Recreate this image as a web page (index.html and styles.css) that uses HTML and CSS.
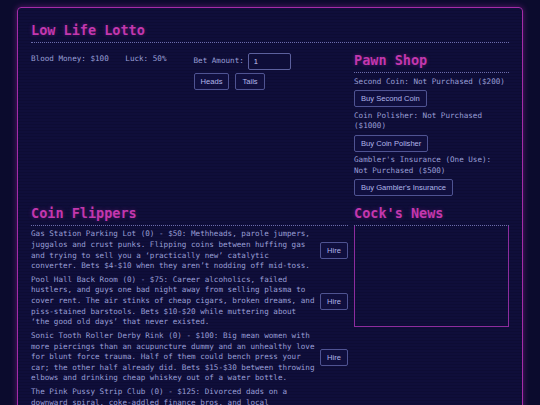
FILE: index.html
```html
<!DOCTYPE html>
<html lang="en">
<head>
  <meta charset="UTF-8" />
  <meta name="viewport" content="width=device-width, initial-scale=1.0" />
  <title>Low Life Lotto</title>
  <link rel="stylesheet" href="styles.css">
</head>
<body>
  <div class="game">
    <h1>Low Life Lotto</h1>

    <div class="board">
      <div class="table">
        <div class="stats">
          <span class="stat">Blood Money: $100</span>
          <span class="stat">Luck: 50%</span>
        </div>
        <div class="bet">
          <label class="bet-row">Bet Amount:
            <input id="bet" type="number" value="1" min="1" />
          </label>
          <div class="bet-buttons">
            <button>Heads</button>
            <button>Tails</button>
          </div>
        </div>
      </div>

      <div class="pawn">
        <h2>Pawn Shop</h2>
        <div class="item">
          <p>Second Coin: Not Purchased ($200)</p>
          <button>Buy Second Coin</button>
        </div>
        <div class="item">
          <p>Coin Polisher: Not Purchased ($1000)</p>
          <button>Buy Coin Polisher</button>
        </div>
        <div class="item">
          <p>Gambler's Insurance (One Use): Not Purchased ($500)</p>
          <button>Buy Gambler's Insurance</button>
        </div>
      </div>

      <div class="flippers">
        <h2>Coin Flippers</h2>
        <div class="flipper">
          <p>Gas Station Parking Lot (0) - $50: Methheads, parole jumpers, juggalos and crust punks. Flipping coins between huffing gas and trying to sell you a ‘practically new’ catalytic converter. Bets $4-$10 when they aren’t nodding off mid-toss.</p>
          <button>Hire</button>
        </div>
        <div class="flipper">
          <p>Pool Hall Back Room (0) - $75: Career alcoholics, failed hustlers, and guys one bad night away from selling plasma to cover rent. The air stinks of cheap cigars, broken dreams, and piss-stained barstools. Bets $10-$20 while muttering about ‘the good old days’ that never existed.</p>
          <button>Hire</button>
        </div>
        <div class="flipper">
          <p>Sonic Tooth Roller Derby Rink (0) - $100: Big mean women with more piercings than an acupuncture dummy and an unhealthy love for blunt force trauma. Half of them could bench press your car; the other half already did. Bets $15-$30 between throwing elbows and drinking cheap whiskey out of a water bottle.</p>
          <button>Hire</button>
        </div>
        <div class="flipper">
          <p>The Pink Pussy Strip Club (0) - $125: Divorced dads on a downward spiral, coke-addled finance bros, and local councilmen blowing the mortgage money on lap dances. Everyone is sweating, nobody is happy, and the DJ hasn't changed the song since 2009. Bets $20-$40 in crumpled singles and bad intentions.</p>
          <button>Hire</button>
        </div>
      </div>

      <div class="news">
        <h2>Cock's News</h2>
        <div id="news-feed" class="news-feed"></div>
      </div>
    </div>
  </div>
</body>
</html>
```

FILE: styles.css
```css
body {
  margin: 0;
  padding: 7px 17px;
  background: #0b0b2d;
  color: #9a9fd6;
  font-family: "DejaVu Sans Mono", monospace;
  font-size: 7.6px;
  line-height: 1.4;
}
.game {
  padding: 14px 13px 20px;
  border: 1px solid #a42ca8;
  border-radius: 4px;
  background: repeating-linear-gradient(to bottom, #0f0e3a 0, #0f0e3a 2px, #0d0c34 2px, #0d0c34 3px);
  box-shadow: 0 0 6px rgba(190, 40, 190, 0.45);
}
h1, h2 {
  margin: 0;
  padding-bottom: 4px;
  border-bottom: 1px dotted #6c6caa;
  color: #c337ae;
  font-size: 13.5px;
  line-height: 16px;
  font-weight: bold;
  text-shadow: 0 0 4px rgba(200, 50, 180, 0.35);
}
h1 {
  margin-bottom: 9px;
}
h2 {
  margin-bottom: 3.5px;
}
p {
  margin: 0;
}
.board {
  display: grid;
  grid-template-columns: 317px 1fr;
  column-gap: 6px;
  row-gap: 5px;
}
.table {
  display: flex;
  gap: 8px;
  padding-top: 1px;
}
.stats {
  flex: 1;
  padding-top: 1px;
}
.stat {
  margin-right: 12px;
}
.bet {
  flex: 1;
}
.bet-row {
  display: flex;
  align-items: center;
  gap: 4px;
}
input {
  width: 43px;
  height: 17px;
  box-sizing: border-box;
  padding: 0 5px;
  border: 1px solid #5c609e;
  border-radius: 2px;
  background: #0e0d38;
  color: #c4c8f2;
  font-family: "Liberation Sans", Arial, sans-serif;
  font-size: 7.6px;
}
.bet-buttons {
  display: flex;
  gap: 6px;
  margin-top: 3px;
}
button {
  height: 17px;
  padding: 0 6px;
  border: 1px solid #4f5392;
  border-radius: 2px;
  background: #100f3e;
  color: #b0b6ea;
  font-family: "Liberation Sans", Arial, sans-serif;
  font-size: 7.6px;
  cursor: pointer;
}
.item {
  margin-bottom: 3.4px;
}
.item p {
  margin-bottom: 3px;
}
.flipper {
  display: flex;
  align-items: center;
  gap: 4px;
  margin-bottom: 3px;
}
.flipper p {
  flex: 1;
}
.news h2 {
  margin-bottom: 0;
}
.news-feed {
  height: 100px;
  border: 1px solid #8c2c9e;
  border-top: none;
}
```
